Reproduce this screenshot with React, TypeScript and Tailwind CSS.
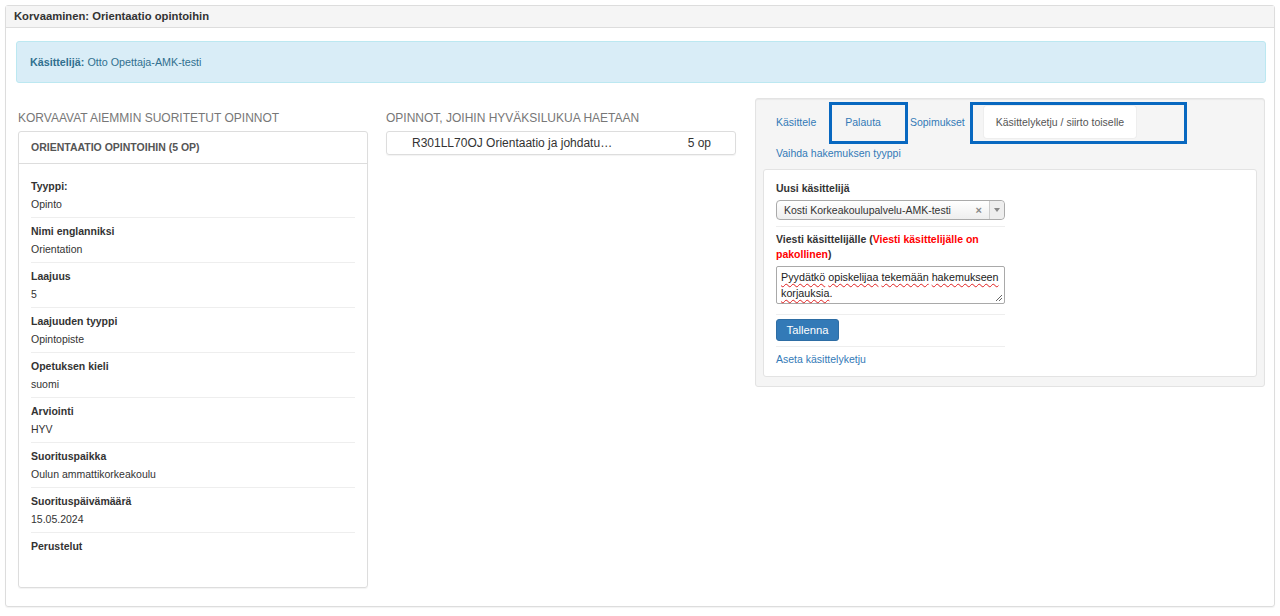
import React from "react";

const items: [string, string][] = [
  ["Tyyppi:", "Opinto"],
  ["Nimi englanniksi", "Orientation"],
  ["Laajuus", "5"],
  ["Laajuuden tyyppi", "Opintopiste"],
  ["Opetuksen kieli", "suomi"],
  ["Arviointi", "HYV"],
  ["Suorituspaikka", "Oulun ammattikorkeakoulu"],
  ["Suorituspäivämäärä", "15.05.2024"],
  ["Perustelut", ""],
];

function Squiggle({ children }: { children: React.ReactNode }) {
  return (
    <span className="underline decoration-wavy decoration-[#e02020] decoration-1 underline-offset-[2px]">
      {children}
    </span>
  );
}

export default function App() {
  return (
    <div className="w-[1280px] h-[616px] bg-white p-[5px] font-['Liberation_Sans',Arial,sans-serif] text-[#333] text-[10.5px] leading-[15px]">
      <div className="border border-[#ddd] rounded-[3px] h-[602px] shadow-[0_1px_1px_rgba(0,0,0,0.05)]">
        <div className="h-[22px] bg-[#f5f5f5] border-b border-[#ddd] px-[8px] flex items-center font-bold text-[11.25px] text-[#333]">
          Korvaaminen: Orientaatio opintoihin
        </div>
        <div className="pl-[10px] pt-[13px]">
          <div className="w-[1250px] h-[42px] bg-[#d9edf7] border border-[#bce8f1] rounded-[3px] px-[13px] flex items-center text-[#31708f] text-[10.75px]">
            <span className="font-bold">Käsittelijä:</span>
            <span className="ml-[3px]">Otto Opettaja-AMK-testi</span>
          </div>

          <div className="flex items-start mt-[15px] ml-[2px]">
            {/* Left column */}
            <div className="w-[350px] pt-[13px]">
              <div className="h-[15px] leading-[15px] text-[12px] text-[#777] uppercase">
                Korvaavat aiemmin suoritetut opinnot
              </div>
              <div className="mt-[5px] h-[457px] border border-[#ddd] rounded-[3px] shadow-[0_1px_1px_rgba(0,0,0,0.05)]">
                <div className="h-[32px] border-b border-[#ddd] px-[12px] flex items-center font-bold text-[#555]">
                  ORIENTAATIO OPINTOIHIN (5 OP)
                </div>
                <div className="px-[12px] pt-[9px]">
                  {items.map(([label, value], i) => (
                    <div
                      key={label}
                      className={
                        "pt-[5px] pb-[5px] " +
                        (i < items.length - 1 ? "border-b border-[#eee]" : "")
                      }
                    >
                      <div className="h-[16px] leading-[16px] font-bold">{label}</div>
                      <div className="mt-[2px] h-[16px] leading-[16px]">{value}</div>
                    </div>
                  ))}
                </div>
              </div>
            </div>

            {/* Middle column */}
            <div className="w-[350px] ml-[18px] pt-[13px]">
              <div className="h-[15px] leading-[15px] text-[12px] text-[#777] uppercase">
                Opinnot, joihin hyväksilukua haetaan
              </div>
              <div className="mt-[5px] h-[24px] border border-[#ddd] rounded-[3px] flex items-center justify-between pl-[25px] pr-[24px] text-[12px] shadow-[0_1px_1px_rgba(0,0,0,0.05)]">
                <span>R301LL70OJ Orientaatio ja johdatu…</span>
                <span>5 op</span>
              </div>
            </div>

            {/* Right column */}
            <div className="relative w-[510px] ml-[19px] h-[289px] bg-[#f5f5f5] border border-[#e3e3e3] rounded-[3px] shadow-[inset_0_1px_1px_rgba(0,0,0,0.05)] pt-[7px] pl-[8px]">
              <div className="flex items-center h-[32px] gap-[5px]">
                <div className="px-[12px] h-[32px] leading-[32px] text-[#337ab7]">Käsittele</div>
                <div className="px-[12px] h-[32px] leading-[32px] text-[#337ab7]">Palauta</div>
                <div className="px-[12px] h-[32px] leading-[32px] text-[#337ab7]">Sopimukset</div>
                <div className="px-[12px] h-[32px] leading-[32px] text-[#555] bg-white rounded-[3px] ml-[2px] shadow-[0_0_0_1px_#eee]">
                  Käsittelyketju / siirto toiselle
                </div>
              </div>
              <div className="h-[30px] leading-[30px] px-[12px] text-[#337ab7]">
                Vaihda hakemuksen tyyppi
              </div>
              <div className="mt-[1px] -ml-[1px] w-[494px] h-[208px] bg-white border border-[#e3e3e3] rounded-[3px] pl-[12px] pt-[11px]">
                <div className="w-[229px]">
                  <div className="font-bold leading-[15px]">Uusi käsittelijä</div>
                  <div className="mt-[4px] h-[20px] border border-[#aaa] rounded-[4px] bg-gradient-to-b from-white to-[#eee] flex items-center">
                    <span className="pl-[7px] flex-1 whitespace-nowrap">Kosti Korkeakoulupalvelu-AMK-testi</span>
                    <span className="text-[#888] font-bold text-[11px] leading-[11px] pr-[7px]">×</span>
                    <span className="w-[15px] h-full border-l border-[#ccc] flex items-center justify-center bg-[#eee] rounded-r-[4px]">
                      <span className="w-0 h-0 border-l-[3px] border-r-[3px] border-t-[4px] border-l-transparent border-r-transparent border-t-[#888]"></span>
                    </span>
                  </div>
                  <div className="mt-[6px] border-t border-[#eee]"></div>
                  <div className="mt-[5px] font-bold leading-[15px]">
                    Viesti käsittelijälle (<span className="text-[#ff0000]">Viesti käsittelijälle on pakollinen</span>)
                  </div>
                  <div className="relative mt-[4px] h-[38px] border border-[#a9a9a9] rounded-[2px] pl-[4px] pt-[2px] text-[10.75px] leading-[16px] text-[#222]">
                    <Squiggle>Pyydätkö</Squiggle> <Squiggle>opiskelijaa</Squiggle> <Squiggle>tekemään</Squiggle>{" "}
                    <Squiggle>hakemukseen</Squiggle> <Squiggle>korjauksia</Squiggle>.
                    <svg className="absolute right-[1px] bottom-[1px]" width="8" height="8" viewBox="0 0 8 8">
                      <path d="M7 1 L1 7 M7 4 L4 7" stroke="#666" strokeWidth="1" />
                    </svg>
                  </div>
                  <div className="mt-[10px] border-t border-[#eee]"></div>
                  <div className="mt-[4px] w-[63px] h-[22px] rounded-[3px] bg-[#337ab7] border border-[#2e6da4] text-white text-[11.25px] flex items-center justify-center">
                    Tallenna
                  </div>
                  <div className="mt-[5px] border-t border-[#eee]"></div>
                  <div className="mt-[5px] leading-[15px] text-[#337ab7]">Aseta käsittelyketju</div>
                </div>
              </div>

              {/* annotation boxes */}
              <div className="absolute left-[73px] top-[3px] w-[79px] h-[42px] border-[3px] border-[#0868c0]"></div>
              <div className="absolute left-[214px] top-[3px] w-[217px] h-[42px] border-[3px] border-[#0868c0]"></div>
            </div>
          </div>
        </div>
      </div>
    </div>
  );
}
